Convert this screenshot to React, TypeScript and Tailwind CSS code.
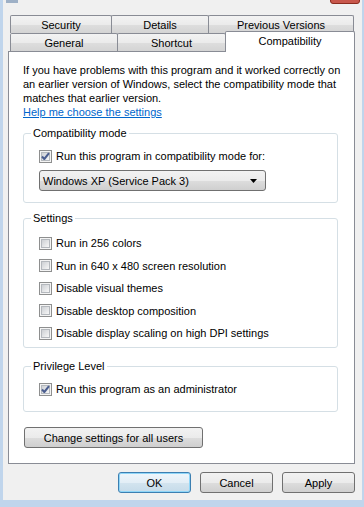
import React from 'react'

const btnBg =
  'bg-[linear-gradient(to_bottom,#f2f2f2_0%,#ebebeb_50%,#dddddd_51%,#cfcfcf_100%)]'

const Check = ({ checked }: { checked?: boolean }) => (
  <span className="relative flex h-[13px] w-[13px] shrink-0 items-center justify-center border border-[#8e8f8f] bg-[#f4f4f4]">
    <span className="h-[9px] w-[9px] border border-[#b4b8bd] bg-gradient-to-br from-[#cdd0d4] to-[#f7f7f7]" />
    {checked && (
      <svg viewBox="0 0 13 13" className="absolute left-[-1px] top-[-1px] h-[13px] w-[13px]">
        <path d="M3 6.5 L5.3 9 L10 3.2" fill="none" stroke="#4a5d8f" strokeWidth="2" strokeLinejoin="round" />
      </svg>
    )}
  </span>
)

const Row = ({ label, checked }: { label: string; checked?: boolean }) => (
  <div className="flex h-[14px] items-center gap-[4px] pl-[15px]">
    <Check checked={checked} />
    <span>{label}</span>
  </div>
)

const Tab = ({ label, w, first }: { label: string; w: string; first?: boolean }) => (
  <div
    className={`flex h-[18px] items-center justify-center rounded-t-[2px] border border-b-0 border-[#898c95] bg-[linear-gradient(to_bottom,#f3f3f3_0%,#ebebeb_50%,#dedede_51%,#d4d4d4_100%)] ${w} ${first ? '' : 'ml-[-1px]'}`}
  >
    {label}
  </div>
)

const settings = [
  'Run in 256 colors',
  'Run in 640 x 480 screen resolution',
  'Disable visual themes',
  'Disable desktop composition',
  'Disable display scaling on high DPI settings',
]

export default function App() {
  return (
    <div className="flex h-[507px] w-[364px] flex-col bg-[#c0d5ec] font-['Liberation_Sans',Arial,sans-serif] text-[11px] leading-[14px] text-black">
      <div className="relative ml-[3px] mr-[2px] flex h-[500px] flex-col bg-[#f0f0f0] pt-[15px]">
        {/* title bar remnants */}
        <div className="absolute left-[3px] top-0 h-[3px] w-[12px] bg-[#9eb0c6]" />
        <div className="absolute right-[2px] top-[-10px] h-[14px] w-[30px] rounded-b-[3px] border border-[#8a2c1f] bg-[#c8574c]" />

        {/* back row of tabs */}
        <div className="flex h-[18px] pl-[7px]">
          <Tab label="Security" w="w-[102px]" first />
          <Tab label="Details" w="w-[98px]" />
          <Tab label="Previous Versions" w="w-[146px]" />
        </div>

        {/* front row of tabs */}
        <div className="mt-[-2px] flex h-[20px] items-end pl-[7px]">
          <Tab label="General" w="w-[108px]" first />
          <Tab label="Shortcut" w="w-[109px]" />
          <div className="relative z-10 mb-[-1px] ml-[-1px] flex h-[21px] w-[130px] justify-center rounded-t-[2px] border border-b-0 border-[#898c95] bg-white pt-[2px]">
            Compatibility
          </div>
        </div>

        {/* tab page */}
        <div className="ml-[5px] flex h-[413px] w-[347px] flex-col border border-[#898c95] bg-white pl-[14px] pt-[11px]">
          <p>
            If you have problems with this program and it worked correctly on
            <br />
            an earlier version of Windows, select the compatibility mode that
            <br />
            matches that earlier version.
          </p>
          <a className="w-fit text-[#0066cc] underline">Help me choose the settings</a>

          <fieldset className="mt-[7px] h-[77px] w-[315px] rounded-[3px] border border-[#d5dfe5]">
            <legend className="ml-[7px] px-[2px]">Compatibility mode</legend>
            <div className="mt-[9px]">
              <Row label="Run this program in compatibility mode for:" checked />
            </div>
            <div
              className={`ml-[15px] mt-[7px] flex h-[21px] w-[227px] items-center justify-between rounded-[3px] border border-[#707070] pl-[3px] pr-[8px] ${btnBg}`}
            >
              <span>Windows XP (Service Pack 3)</span>
              <svg viewBox="0 0 7 4" className="h-[4px] w-[7px]">
                <path d="M0 0 H7 L3.5 4 Z" fill="#000" />
              </svg>
            </div>
          </fieldset>

          <fieldset className="mt-[8px] h-[137px] w-[315px] rounded-[3px] border border-[#d5dfe5]">
            <legend className="ml-[7px] px-[2px]">Settings</legend>
            <div className="mt-[11px] flex flex-col gap-[8.5px]">
              {settings.map((s) => (
                <Row key={s} label={s} />
              ))}
            </div>
          </fieldset>

          <fieldset className="mt-[11px] h-[53px] w-[315px] rounded-[3px] border border-[#d5dfe5]">
            <legend className="ml-[7px] px-[2px]">Privilege Level</legend>
            <div className="mt-[9px]">
              <Row label="Run this program as an administrator" checked />
            </div>
          </fieldset>

          <div
            className={`ml-[1px] mt-[15px] flex h-[21px] w-[179px] items-center justify-center rounded-[3px] border border-[#707070] ${btnBg}`}
          >
            Change settings for all users
          </div>
        </div>

        {/* dialog buttons */}
        <div className="mt-[8px] flex justify-end gap-[9px] pr-[7px]">
          <div className="flex h-[21px] w-[73px] items-center justify-center rounded-[3px] border border-[#3c7fb1] bg-[linear-gradient(to_bottom,#eef6fb_0%,#e3eef6_50%,#d3e4ef_51%,#c6dbe9_100%)] shadow-[inset_0_0_0_1px_#8fd6f8]">
            OK
          </div>
          <div className={`flex h-[21px] w-[73px] items-center justify-center rounded-[3px] border border-[#707070] ${btnBg}`}>
            Cancel
          </div>
          <div className={`flex h-[21px] w-[73px] items-center justify-center rounded-[3px] border border-[#707070] ${btnBg}`}>
            Apply
          </div>
        </div>
      </div>
    </div>
  )
}
